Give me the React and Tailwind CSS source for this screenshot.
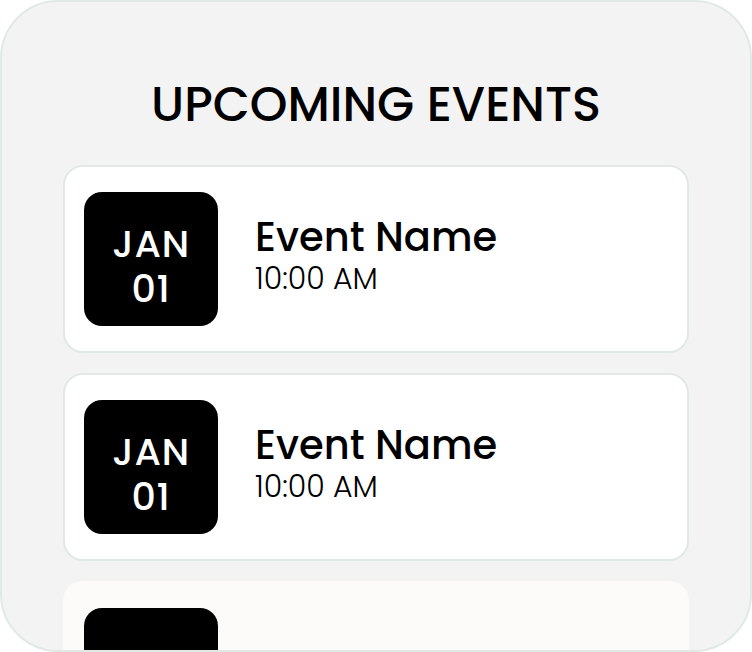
import React from 'react'

const events = [
  { month: 'JAN', day: '01', name: 'Event Name', time: '10:00 AM' },
  { month: 'JAN', day: '01', name: 'Event Name', time: '10:00 AM' },
  { month: 'JAN', day: '01', name: 'Event Name', time: '10:00 AM', faded: true },
]

const EventCard = ({ event }) => {
  return (
    <div
      className={`flex items-center gap-[37px] h-[188px] shrink-0 rounded-[20px] border-2 px-[19px] ${
        event.faded ? 'bg-[#fcfbfa] border-transparent text-transparent' : 'bg-white border-[#e2e8e5] text-black'
      }`}
    >
      <div className="w-[134px] h-[134px] shrink-0 rounded-[18px] bg-black flex flex-col items-center justify-center pt-[14px] text-[38px] font-medium leading-[45px] tracking-[0.02em]">
        <span className={event.faded ? 'text-transparent' : 'text-white'}>{event.month}</span>
        <span className={event.faded ? 'text-transparent' : 'text-white'}>{event.day}</span>
      </div>
      <div className="flex flex-col pb-[7px]">
        <h3 className="text-[40px] font-medium leading-[44px]">{event.name}</h3>
        <p className="mt-[3px] text-[30px] font-light leading-[34px]">{event.time}</p>
      </div>
    </div>
  )
}

export default function App() {
  return (
    <div className="w-[752px] h-[652px] bg-white font-['Poppins','Inter',sans-serif]">
      <div className="w-full h-full rounded-[58px] border-2 border-[#e2e8e5] bg-[#f3f3f4] overflow-hidden flex flex-col">
        <h2 className="pt-[79px] pb-[36px] text-center text-[48px] font-medium leading-[48px] text-black">
          UPCOMING EVENTS
        </h2>
        <div className="flex flex-col gap-[20px] px-[61px]">
          {events.map((event, idx) => (
            <EventCard key={idx} event={event} />
          ))}
        </div>
      </div>
    </div>
  )
}
